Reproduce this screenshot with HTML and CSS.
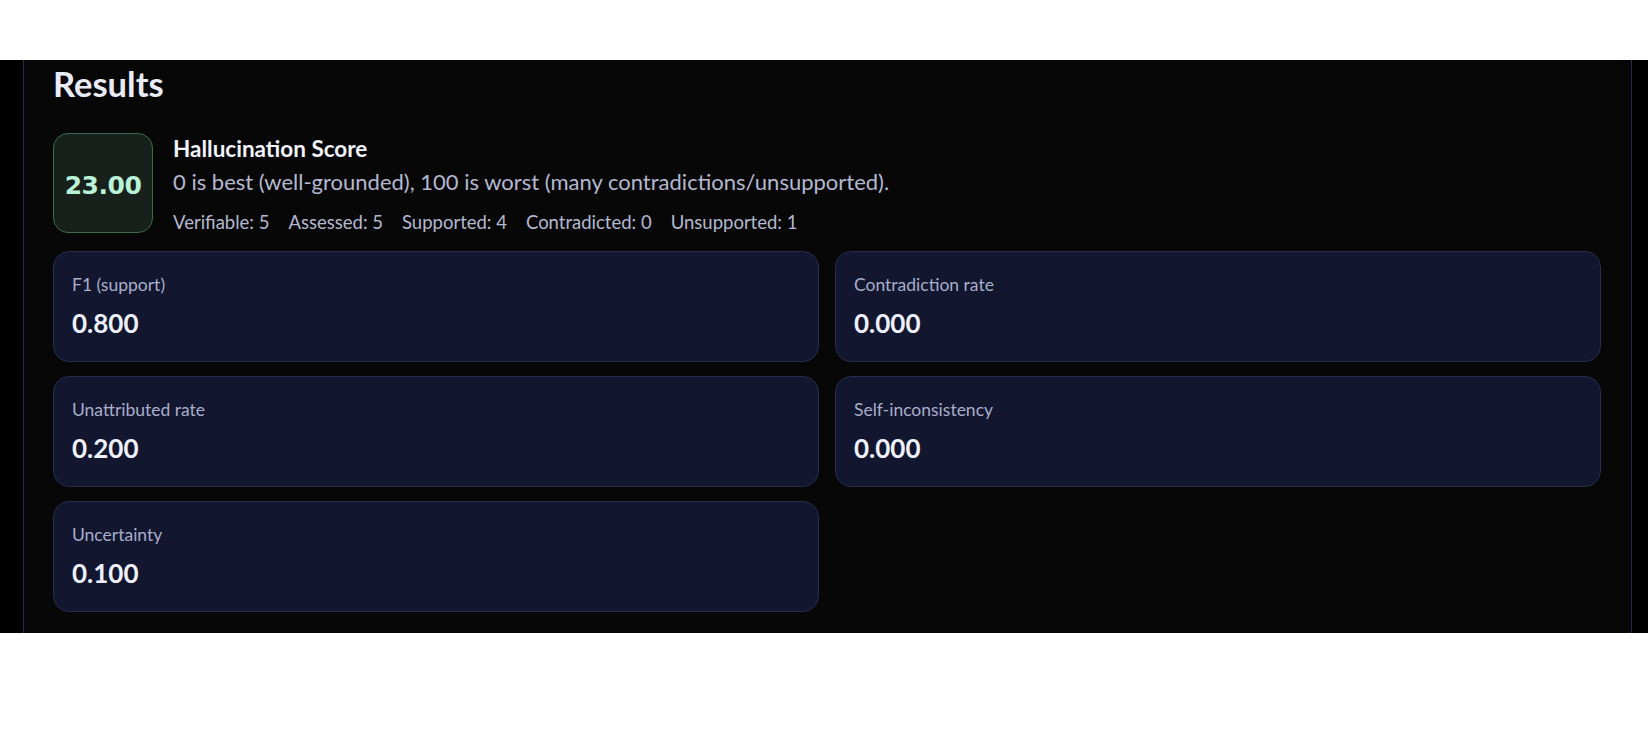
FILE: index.html
```html
<!DOCTYPE html>
<html>
<head>
  <title>Results</title>
  <link rel="stylesheet" href="styles.css">
</head>
<body>
  <div class="stage">
    <div class="panel">
      <h2>Results</h2>

      <div class="summary">
        <div class="score-box">23.00</div>
        <div class="summary-text">
          <div class="summary-title">Hallucination Score</div>
          <div class="summary-desc">0 is best (well-grounded), 100 is worst (many contradictions/unsupported).</div>
          <div class="summary-stats">
            <span>Verifiable: 5</span>
            <span>Assessed: 5</span>
            <span>Supported: 4</span>
            <span>Contradicted: 0</span>
            <span>Unsupported: 1</span>
          </div>
        </div>
      </div>

      <div class="metrics">
        <div class="metric">
          <div class="metric-label">F1 (support)</div>
          <div class="metric-value">0.800</div>
        </div>
        <div class="metric">
          <div class="metric-label">Contradiction rate</div>
          <div class="metric-value">0.000</div>
        </div>
        <div class="metric">
          <div class="metric-label">Unattributed rate</div>
          <div class="metric-value">0.200</div>
        </div>
        <div class="metric">
          <div class="metric-label">Self-inconsistency</div>
          <div class="metric-value">0.000</div>
        </div>
        <div class="metric">
          <div class="metric-label">Uncertainty</div>
          <div class="metric-value">0.100</div>
        </div>
      </div>
    </div>
  </div>
</body>
</html>
```

FILE: styles.css
```css
body {
  margin: 0;
  padding: 0;
  background: #ffffff;
  font-family: 'Segoe UI', Lato, 'Noto Sans', sans-serif;
}
.stage {
  margin-top: 60px;
  height: 573px;
  background: #000000;
  padding: 0 16px 0 23px;
  overflow: hidden;
}
.panel {
  height: 100%;
  box-sizing: border-box;
  background: #070707;
  border-left: 1px solid #262b47;
  border-right: 1px solid #262b47;
  padding: 0 30px 0 29px;
}
h2 {
  margin: 0;
  padding-top: 2px;
  font-size: 34.5px;
  line-height: 44px;
  font-weight: 700;
  color: #e9ebf8;
}
.summary {
  display: flex;
  gap: 20px;
  margin-top: 27px;
}
.score-box {
  width: 100px;
  height: 100px;
  box-sizing: border-box;
  flex-shrink: 0;
  display: flex;
  align-items: center;
  justify-content: center;
  padding-top: 4px;
  background: #18201b;
  border: 1px solid #3b6b4a;
  border-radius: 15px;
  color: #b9f2d6;
  font-family: 'DejaVu Sans', sans-serif;
  font-size: 25px;
  font-weight: 700;
  letter-spacing: -0.5px;
}
.summary-text {
  padding-top: 1px;
}
.summary-title {
  font-size: 22.5px;
  font-weight: 700;
  line-height: 30px;
  color: #f2f3fb;
}
.summary-desc {
  margin-top: 3px;
  font-size: 22px;
  line-height: 30px;
  color: #b4b9d0;
}
.summary-stats {
  margin-top: 12px;
  display: flex;
  gap: 19px;
  font-size: 18.5px;
  line-height: 26px;
  color: #b4b9d0;
}
.metrics {
  display: grid;
  grid-template-columns: 1fr 1fr;
  gap: 14px 16px;
  margin-top: 16px;
}
.metric {
  height: 111px;
  box-sizing: border-box;
  background: #12162f;
  border: 1px solid #272d4b;
  border-radius: 16px;
  padding: 22px 18px 0;
}
.metric-label {
  font-size: 17.5px;
  line-height: 22px;
  color: #a9aeca;
}
.metric-value {
  margin-top: 11px;
  font-size: 26px;
  font-weight: 700;
  line-height: 32px;
  color: #eef0fb;
}
```
